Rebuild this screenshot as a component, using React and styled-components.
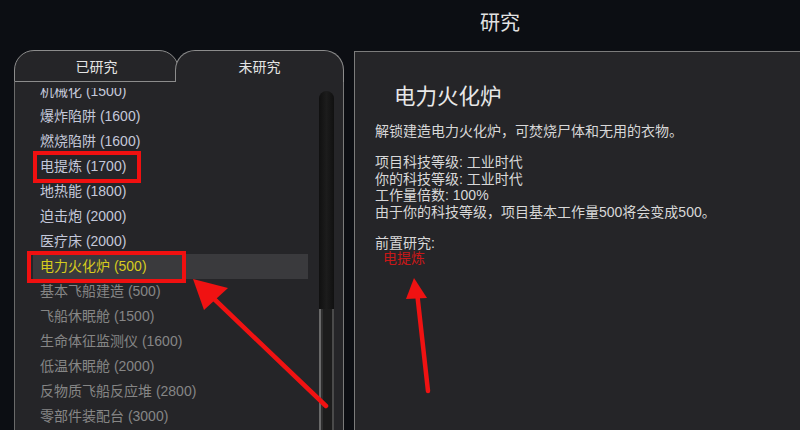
import styled, { createGlobalStyle } from "styled-components";

const GlobalStyle = createGlobalStyle`
	* {
		box-sizing: border-box;
	}
	body {
		margin: 0;
		background: #0c0e13;
		font-family: "Liberation Sans", "Noto Sans CJK SC", sans-serif;
		overflow: hidden;
	}
`;

const Page = styled.div`
	position: relative;
	width: 800px;
	height: 430px;
	overflow: hidden;
`;

const Header = styled.div`
	height: 50px;
	display: flex;
	justify-content: center;
	padding-left: 200px;
	padding-top: 7px;
	font-size: 20px;
	color: #e2e2e2;
`;

const Main = styled.div`
	display: flex;
	padding-left: 14px;
	height: 380px;
`;

const LeftCol = styled.div`
	width: 330px;
	display: flex;
	flex-direction: column;
`;

const Tabs = styled.div`
	display: flex;
	height: 32px;
`;

const Tab = styled.div`
	position: relative;
	z-index: ${(p) => (p.active ? 2 : 1)};
	width: ${(p) => p.w}px;
	margin-left: ${(p) => (p.active ? -4 : 0)}px;
	height: 32px;
	background: #252528;
	border: 1px solid #8c8c8c;
	border-bottom: ${(p) => (p.active ? "none" : "1px solid #8c8c8c")};
	border-radius: 20px 20px 0 0;
	display: flex;
	align-items: center;
	justify-content: center;
	font-size: 14px;
	color: #e4e4e4;
	padding-bottom: ${(p) => (p.active ? 1 : 0)}px;
`;

const Body = styled.div`
	flex: 1;
	display: flex;
	background: #252528;
	border-left: 1px solid #6a6a6a;
	border-right: 1px solid #7a7a7a;
	overflow: hidden;
`;

const Viewport = styled.div`
	width: 304px;
	margin-top: 6px;
	overflow: hidden;
`;

const List = styled.div`
	padding-left: 18px;
	margin-top: -9px;
`;

const Row = styled.div`
	position: relative;
	width: 275px;
	height: 25px;
	line-height: 25px;
	padding-left: 7px;
	font-size: 14px;
	white-space: nowrap;
	color: ${(p) => (p.selected ? "#d6cb1e" : p.locked ? "#868686" : "#c4c8da")};
	background: ${(p) => (p.selected ? "#3a3a3d" : "transparent")};
`;

const Mark = styled.div`
	position: absolute;
	left: ${(p) => p.x}px;
	top: ${(p) => p.y}px;
	width: ${(p) => p.w}px;
	height: 32px;
	border: 4px solid #f01010;
	pointer-events: none;
`;

const Track = styled.div`
	width: 15px;
	margin-top: 9px;
	border-radius: 8px 8px 0 0;
	background: linear-gradient(90deg, #101010, #1c1c1c 50%, #101010);
	display: flex;
	flex-direction: column;
	justify-content: flex-end;
`;

const Thumb = styled.div`
	height: 121px;
	background: #1c1c1c;
	border-left: 2px solid #6a6a6a;
	border-right: 2px solid #4a4a4a;
	box-shadow: inset 2px 0 0 #2e2e2e;
`;

const Detail = styled.div`
	flex: 1;
	margin-left: 10px;
	margin-top: 1px;
	margin-right: -2px;
	background: #252528;
	border: 1px solid #7c7c7c;
	border-bottom: none;
	padding: 0 20px;
	color: #d8d8d8;
	font-size: 14px;
	line-height: 16.5px;
`;

const Title = styled.div`
	margin: 33px 0 0 19px;
	font-size: 21.5px;
	line-height: 24px;
	color: #e8e8e8;
`;

const Para = styled.div`
	margin-top: ${(p) => p.gap}px;
`;

const Prereq = styled.div`
	padding-left: 8px;
	color: #c81818;
	line-height: 15px;
`;

const Arrows = styled.svg`
	position: absolute;
	left: 0;
	top: 0;
	pointer-events: none;
`;

const items = [
	{ name: "机械化 (1500)" },
	{ name: "爆炸陷阱 (1600)" },
	{ name: "燃烧陷阱 (1600)" },
	{ name: "电提炼 (1700)", mark: { x: 0, y: -3, w: 108 } },
	{ name: "地热能 (1800)" },
	{ name: "迫击炮 (2000)" },
	{ name: "医疗床 (2000)" },
	{ name: "电力火化炉 (500)", selected: true, mark: { x: -6, y: -3, w: 159 } },
	{ name: "基本飞船建造 (500)", locked: true },
	{ name: "飞船休眠舱 (1500)", locked: true },
	{ name: "生命体征监测仪 (1600)", locked: true },
	{ name: "低温休眠舱 (2000)", locked: true },
	{ name: "反物质飞船反应堆 (2800)", locked: true },
	{ name: "零部件装配台 (3000)", locked: true },
];

function App() {
	return (
		<Page>
			<GlobalStyle />
			<Header>研究</Header>
			<Main>
				<LeftCol>
					<Tabs>
						<Tab w={165}>已研究</Tab>
						<Tab w={169} active>
							未研究
						</Tab>
					</Tabs>
					<Body>
						<Viewport>
							<List>
								{items.map((it) => (
									<Row key={it.name} selected={it.selected} locked={it.locked}>
										{it.name}
										{it.mark && <Mark x={it.mark.x} y={it.mark.y} w={it.mark.w} />}
									</Row>
								))}
							</List>
						</Viewport>
						<Track>
							<Thumb />
						</Track>
					</Body>
				</LeftCol>
				<Detail>
					<Title>电力火化炉</Title>
					<Para gap={14}>解锁建造电力火化炉，可焚烧尸体和无用的衣物。</Para>
					<Para gap={14.5}>
						项目科技等级: 工业时代
						<br />
						你的科技等级: 工业时代
						<br />
						工作量倍数: 100%
						<br />
						由于你的科技等级，项目基本工作量500将会变成500。
					</Para>
					<Para gap={14.5}>前置研究:</Para>
					<Prereq>电提炼</Prereq>
				</Detail>
			</Main>
			<Arrows width="800" height="430">
				<g fill="#f01212" stroke="#f01212" strokeLinecap="round">
					<line x1="326" y1="406" x2="210" y2="295" strokeWidth="4.5" />
					<polygon points="193,279 228,288 204,310" stroke="none" />
					<line x1="428" y1="391" x2="417" y2="292" strokeWidth="4.5" />
					<polygon points="414,278 427,298 406,299" stroke="none" />
				</g>
			</Arrows>
		</Page>
	);
}

export default App;
